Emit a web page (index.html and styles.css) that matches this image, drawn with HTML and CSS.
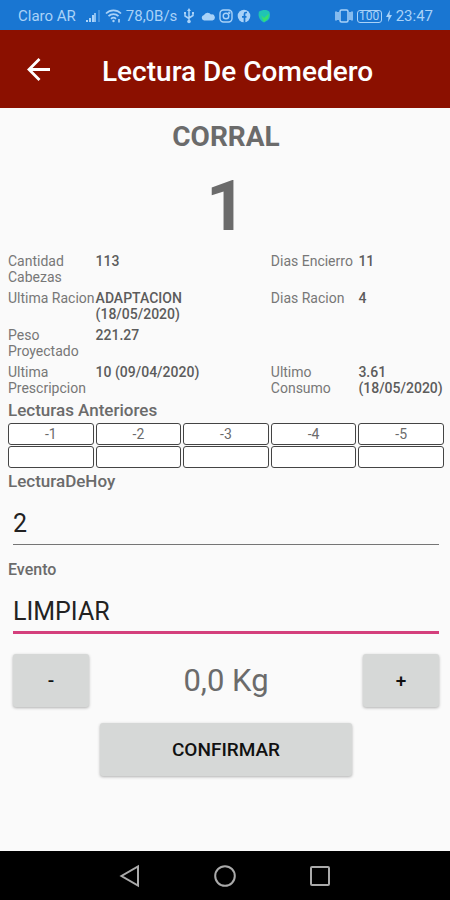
FILE: index.html
```
<!DOCTYPE html>
<html lang="es">
<head>
    <meta charset="UTF-8">
    <meta name="viewport" content="width=device-width, initial-scale=1.0">
    <title>Lectura De Comedero</title>
    <link rel="stylesheet" href="styles.css">
</head>
<body>
    <!-- Status bar -->
    <div class="status-bar">
        <div class="status-left">
            <span class="carrier">Claro AR</span>
            <svg width="16" height="14" viewBox="0 0 16 14" fill="currentColor">
                <path d="M1 11h2v2H1zM4 9h2v4H4zM7 6h2v7H7z"/>
                <path d="M9 4h2v9H9z" opacity=".8"/>
                <path d="M13 1h2v12h-2z" opacity=".3"/>
            </svg>
            <svg width="17" height="14" viewBox="0 0 17 14" fill="none" stroke="currentColor" stroke-width="1.7">
                <path d="M1 4.5a10.5 10.5 0 0 1 15 0M3.5 7.2a7 7 0 0 1 10 0M6 9.8a3.6 3.6 0 0 1 5 0"/>
                <circle cx="8.5" cy="12" r="1.2" fill="currentColor" stroke="none"/>
                <path d="M14 10v3.5"/>
            </svg>
            <span>78,0B/s</span>
            <svg class="usb" width="12" height="16" viewBox="0 0 12 16" fill="none" stroke="currentColor" stroke-width="1.5">
                <path d="M6 2v11M2 5.5V8l4 2.5M10 5v2.5L6 10"/>
                <path d="M6 0l2 3H4zM1 4h2v2H1zM9 4h2v2H9z" fill="currentColor" stroke="none"/>
                <circle cx="6" cy="13.5" r="1.8" fill="currentColor" stroke="none"/>
            </svg>
            <svg width="14" height="10" viewBox="0 0 14 10" fill="currentColor">
                <path d="M3 9.5A2.8 2.8 0 0 1 3 4 4 4 0 0 1 10 3.500a3 3 0 0 1 1.500 6z"/>
            </svg>
            <svg width="14" height="14" viewBox="0 0 14 14" fill="none" stroke="currentColor" stroke-width="1.4">
                <rect x="1" y="1" width="12" height="12" rx="3.5"/>
                <circle cx="7" cy="7" r="2.8"/>
                <circle cx="10.3" cy="3.7" r=".5"/>
            </svg>
            <svg width="14" height="14" viewBox="0 0 14 14">
                <circle cx="7" cy="7" r="6.3" fill="currentColor"/>
                <path d="M10 3.5H9A1.5 1.5 0 0 0 7.500 5v8.500M5 7.800h4.500" fill="none" stroke="#1976d2" stroke-width="1.7"/>
            </svg>
            <svg width="14" height="14" viewBox="0 0 14 14">
                <path d="M2 2.5C5 1 10 0 12.500 3c1 3 .5 7-2 8.500L7 13.500C3 11.500.5 8 2 2.500z" fill="#20c3b4"/>
                <path d="M4 6l3 3 5-4.500-1 5L7 13z" fill="#37e06d"/>
            </svg>
        </div>
        <div class="status-right">
            <svg width="18" height="14" viewBox="0 0 18 14" fill="none" stroke="currentColor" stroke-width="1.5">
                <rect x="5" y="1" width="8" height="12" rx="1.5"/>
                <path d="M3 3v8M15 3v8M1 2.500v9M17 2.500v9"/>
            </svg>
            <span class="battery">100</span>
            <svg width="6" height="12" viewBox="0 0 6 12" fill="currentColor">
                <path d="M4 0L0 7h2.500L2 12l4-7H3.500z"/>
            </svg>
            <span>23:47</span>
        </div>
    </div>

    <!-- Title bar -->
    <header class="title-bar">
        <button class="back-button" aria-label="Volver">
            <svg width="24" height="24" viewBox="0 0 24 24" fill="none" stroke="currentColor" stroke-width="2.8">
                <path d="M13.500 2L3 12.500 13.500 23M3 12.500h21"/>
            </svg>
        </button>
        <h1>Lectura De Comedero</h1>
    </header>

    <main class="content">
        <h2 class="pen-label">CORRAL</h2>
        <div class="pen-number">1</div>

        <dl class="info">
            <dt>Cantidad Cabezas</dt>
            <dd>113</dd>
            <dt class="second">Dias Encierro</dt>
            <dd class="second">11</dd>
            <dt>Ultima&nbsp;Racion</dt>
            <dd>ADAPTACION<br>(18/05/2020)</dd>
            <dt class="second">Dias Racion</dt>
            <dd class="second">4</dd>
            <dt>Peso Proyectado</dt>
            <dd>221.27</dd>
            <dt>Ultima Prescripcion</dt>
            <dd>10 (09/04/2020)</dd>
            <dt class="second">Ultimo Consumo</dt>
            <dd class="second">3.61 (18/05/2020)</dd>
        </dl>

        <h3 class="section-label" id="previous">Lecturas Anteriores</h3>
        <table class="readings" aria-labelledby="previous">
            <thead>
                <tr><th>-1</th><th>-2</th><th>-3</th><th>-4</th><th>-5</th></tr>
            </thead>
            <tbody>
                <tr><td></td><td></td><td></td><td></td><td></td></tr>
            </tbody>
        </table>

        <label class="section-label" for="reading">LecturaDeHoy</label>
        <input class="field" type="text" id="reading" value="2">

        <label class="section-label small" for="eventName">Evento</label>
        <input class="field active" type="text" id="eventName" value="LIMPIAR">

        <div class="stepper">
            <button class="button">-</button>
            <output class="amount">0,0 Kg</output>
            <button class="button">+</button>
        </div>
        <button class="button confirm">CONFIRMAR</button>
    </main>

    <!-- Android navigation -->
    <nav class="nav-bar">
        <button aria-label="Atras">
            <svg width="24" height="24" viewBox="0 0 24 24"><path d="M20 2.500v19L3.500 12z"/></svg>
        </button>
        <button aria-label="Inicio">
            <svg width="24" height="24" viewBox="0 0 24 24"><circle cx="12" cy="12" r="9.8"/></svg>
        </button>
        <button aria-label="Recientes">
            <svg width="24" height="24" viewBox="0 0 24 24"><rect x="3" y="3" width="18" height="18" rx="1"/></svg>
        </button>
    </nav>
</body>
</html>
```

FILE: styles.css
```
* {
    box-sizing: border-box;
}
body {
    margin: 0;
    min-height: 100vh;
    display: flex;
    flex-direction: column;
    background-color: #fafafa;
    color: #6b6b6b;
    font-family: Roboto, sans-serif;
}
button {
    font-family: inherit;
    border: none;
    padding: 0;
    cursor: pointer;
}
svg {
    display: block;
    flex: none;
}

/* Status bar */
.status-bar {
    height: 30px;
    padding: 2px 17px 0 18px;
    display: flex;
    align-items: center;
    justify-content: space-between;
    background-color: #1976d2;
    color: #a9d2f8;
    font-size: 15px;
}
.status-left,
.status-right {
    display: flex;
    align-items: center;
    gap: 4px;
}
.carrier {
    margin-right: 5px;
}
.usb {
    margin: 0 2px;
}
.status-left svg:last-child {
    margin-left: 2px;
}
.battery {
    width: 25px;
    border: 1px solid;
    border-radius: 3px;
    font-size: 12px;
    line-height: 11px;
    text-align: center;
}

/* Title bar */
.title-bar {
    height: 78px;
    padding: 0 26px;
    display: flex;
    align-items: center;
    gap: 52px;
    background-color: #8b1000;
    color: white;
}
.back-button {
    background: none;
    color: white;
}
.title-bar h1 {
    margin: 0;
    padding-top: 4px;
    font-size: 28px;
    font-weight: 500;
}

/* Content */
.content {
    flex: 1;
    padding: 12px 6px 24px 8px;
    display: flex;
    flex-direction: column;
}
.pen-label {
    margin: 0;
    font-size: 28px;
    line-height: 34px;
    text-align: center;
}
.pen-number {
    padding: 12px 0 7px;
    font-size: 70px;
    font-weight: bold;
    line-height: 80px;
    text-align: center;
}
.info {
    margin: 0 0 2px;
    display: grid;
    grid-template-columns: repeat(5, minmax(0, 1fr));
    gap: 5px 2px;
    color: #777;
    font-size: 14px;
    line-height: 16px;
}
.info dt {
    grid-column: 1;
}
.info dd {
    grid-column: 2 / span 2;
    margin: 0;
    color: #5c5c5c;
    font-weight: 500;
}
.info dt.second {
    grid-column: 4;
}
.info dd.second {
    grid-column: 5;
}
.section-label {
    margin: 0;
    font-size: 17px;
    font-weight: 500;
    line-height: 24px;
}
.section-label.small {
    font-size: 16px;
}
.readings {
    margin: 0 -2px;
    table-layout: fixed;
    border-collapse: separate;
    border-spacing: 2px 1px;
}
.readings th,
.readings td {
    height: 22px;
    padding: 0;
    background-color: white;
    border: 1px solid #444;
    border-radius: 3px;
    font-size: 14px;
    font-weight: 400;
    line-height: 16px;
}
.field {
    margin: 0 5px 13px;
    padding: 14px 0 4px;
    height: 52px;
    background: none;
    border: none;
    border-bottom: 1px solid #757575;
    border-radius: 0;
    outline: none;
    color: #222;
    font-family: inherit;
    font-size: 25px;
}
.field.active {
    border-bottom: 3px solid #d43f7c;
}
.stepper {
    margin: 7px 0 16px;
    padding: 0 5px;
    display: flex;
    align-items: center;
    justify-content: space-between;
}
.button {
    width: 76px;
    height: 53px;
    background-color: #d6d8d7;
    border-radius: 3px;
    box-shadow: 0 1px 3px rgba(0, 0, 0, 0.3);
    color: #111;
    font-size: 19px;
    font-weight: 500;
}
.amount {
    font-size: 31px;
}
.confirm {
    width: 252px;
    align-self: center;
}

/* Android navigation */
.nav-bar {
    height: 49px;
    padding: 0 82px;
    display: flex;
    align-items: center;
    justify-content: space-around;
    background-color: black;
}
.nav-bar button {
    background: none;
}
.nav-bar svg {
    fill: none;
    stroke: #aaa;
    stroke-width: 2;
}
```
